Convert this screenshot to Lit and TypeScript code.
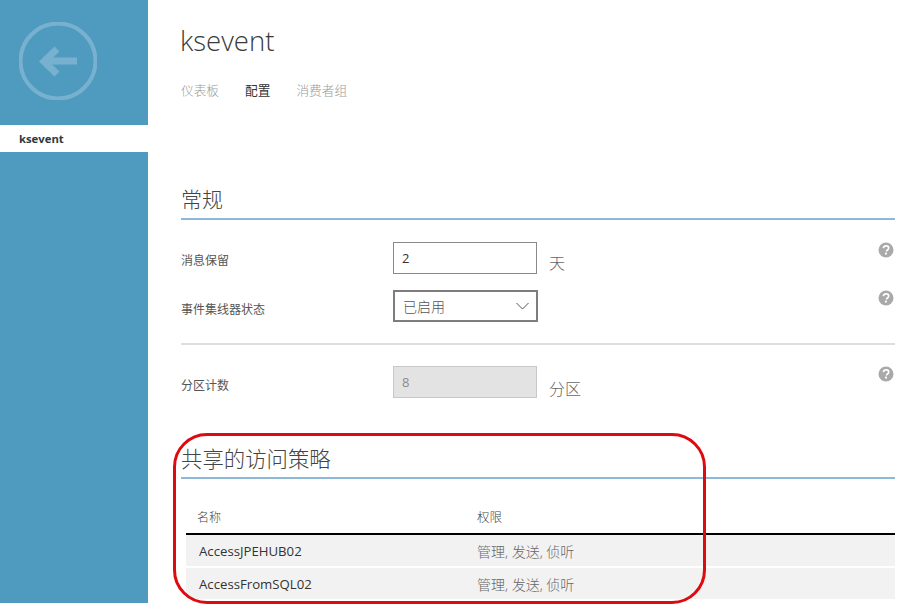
import { LitElement, html, css, svg } from "lit";
import { customElement } from "lit/decorators.js";

const help = html`<svg class="help" viewBox="0 0 16 16" width="16" height="16" aria-hidden="true">
  <circle cx="8" cy="8" r="7.5" fill="#a9a9a9"></circle>
  ${svg`<path d="M5.4 6.1C5.6 4.6 6.7 3.9 8.1 3.9c1.5 0 2.6.9 2.6 2.1 0 1-.6 1.5-1.3 2-.6.4-.9.7-.9 1.5" fill="none" stroke="#fff" stroke-width="1.7"></path>
  <rect x="7" y="10.6" width="1.9" height="1.9" fill="#fff"></rect>`}
</svg>`;

@customElement("app-root")
export class AppRoot extends LitElement {
  static styles = css`
    :host {
      display: block;
      width: 902px;
      height: 609px;
      overflow: hidden;
      background: #fff;
      font-family: "Open Sans", "Noto Sans CJK SC", sans-serif;
      color: #333;
    }
    .page { display: grid; grid-template-columns: 148px 1fr; height: 603px; position: relative; }
    .side { display: flex; flex-direction: column; background: #4f9bc0; }
    .hero { height: 125px; padding: 22px 0 0 19px; box-sizing: border-box; }
    .back { display: block; }
    .side-item {
      height: 27px;
      background: #fff;
      padding-left: 19px;
      box-sizing: border-box;
      display: flex;
      align-items: center;
      font-size: 11.3px;
      font-weight: 700;
      color: #2f3a42;
    }
    .main { padding: 0 7px 0 33px; min-width: 0; }
    h1 {
      margin: 0 0 0 -1px;
      padding-top: 21px;
      height: 39px;
      font-size: 27.5px;
      line-height: 39px;
      font-weight: 300;
      color: #3a3a3a;
    }
    .tabs { display: flex; gap: 26px; margin-top: 21px; height: 18px; font-size: 12.7px; line-height: 18px; color: #9a9a9a; font-weight: 300; }
    .tabs .on { color: #333; font-weight: 400; }
    h2 {
      margin: 0;
      font-weight: 300;
      font-size: 21px;
      line-height: 30px;
      color: #444;
      border-bottom: 2px solid #8db8d8;
      padding-bottom: 4px;
    }
    .general { margin-top: 85px; }
    .row { display: grid; grid-template-columns: 212px 145px auto 1fr 16px; align-items: start; padding-right: 1px; }
    .row .lbl { font-size: 12px; color: #555; line-height: 16px; padding-top: 12px; font-weight: 400; }
    .r1 { margin-top: 22px; height: 48px; }
    .r1 .lbl { padding-top: 11px; }
    .r3 { height: 32px; }
    .field {
      box-sizing: border-box;
      width: 144px;
      height: 32px;
      border: 1px solid #8a8a8a;
      padding: 0 8px;
      display: flex;
      align-items: center;
      font-size: 13px;
      color: #333;
    }
    .select {
      width: 145px;
      border: 2px solid #7d7d7d;
      padding: 0 7px 0 8px;
      justify-content: space-between;
      font-size: 14px;
      color: #555;
      font-weight: 300;
    }
    .disabled { background: #e3e3e3; border-color: #c8c8c8; color: #8c8c8c; }
    .unit { font-size: 16px; line-height: 22px; color: #666; font-weight: 300; padding: 12px 0 0 11px; }
    .r1 .unit { padding-top: 10px; }
    .sep { height: 2px; background: #dedede; margin: 21px 0 21px; }
    .policy { margin-top: 46px; }
    .policy h2 { font-size: 21.4px; line-height: 30px; padding-bottom: 3px; }
    table { border-collapse: collapse; width: 709px; margin: 31px 0 0 5px; table-layout: fixed; }
    th {
      text-align: left;
      font-weight: 300;
      font-size: 12px;
      line-height: 15px;
      color: #444;
      padding: 0 0 8px 11px;
      border-bottom: 2px solid #000;
    }
    th:last-child, td:last-child { padding-left: 0; }
    th:last-child { font-size: 12.5px; }
    th:first-child { width: 280px; }
    td { height: 31px; padding: 0 0 0 13px; font-size: 13.2px; color: #333; background: #f2f2f2; border-bottom: 2px solid #fff; }
    td:last-child { color: #666; font-weight: 300; font-size: 14px; }
    .mark {
      position: absolute;
      left: 173px;
      top: 433px;
      width: 533px;
      height: 171px;
      box-sizing: border-box;
      border: 3px solid #dd0a10;
      border-radius: 34px;
      pointer-events: none;
    }
  `;

  render() {
    return html`
      <div class="page">
        <aside class="side">
          <div class="hero">
            <svg class="back" width="78" height="78" viewBox="0 0 78 78" aria-label="back" fill="none" stroke="#78b1cf">
              <circle cx="39" cy="39" r="37.5" stroke-width="4"></circle>
              <path d="M58 39H26" stroke-width="7"></path>
              <path d="M38 27L25 39.5L38 52" stroke-width="7"></path>
            </svg>
          </div>
          <div class="side-item">ksevent</div>
        </aside>
        <main class="main">
          <h1>ksevent</h1>
          <nav class="tabs"><span>仪表板</span><span class="on">配置</span><span>消费者组</span></nav>
          <section class="general">
            <h2>常规</h2>
            <div class="row r1">
              <span class="lbl">消息保留</span>
              <div class="field">2</div>
              <span class="unit">天</span><span></span>${help}
            </div>
            <div class="row r3">
              <span class="lbl">事件集线器状态</span>
              <div class="field select"><span>已启用</span>
                <svg width="13" height="8" viewBox="0 0 13 8" fill="none" stroke="#555"><path d="M.5 1L6.5 7L12.5 1"></path></svg>
              </div>
              <span></span><span></span>${help}
            </div>
            <div class="sep"></div>
            <div class="row r3">
              <span class="lbl">分区计数</span>
              <div class="field disabled">8</div>
              <span class="unit">分区</span><span></span>${help}
            </div>
          </section>
          <section class="policy">
            <h2>共享的访问策略</h2>
            <table>
              <thead><tr><th>名称</th><th>权限</th></tr></thead>
              <tbody>
                <tr><td>AccessJPEHUB02</td><td>管理, 发送, 侦听</td></tr>
                <tr><td>AccessFromSQL02</td><td>管理, 发送, 侦听</td></tr>
              </tbody>
            </table>
          </section>
        </main>
        <div class="mark"></div>
      </div>
    `;
  }
}
